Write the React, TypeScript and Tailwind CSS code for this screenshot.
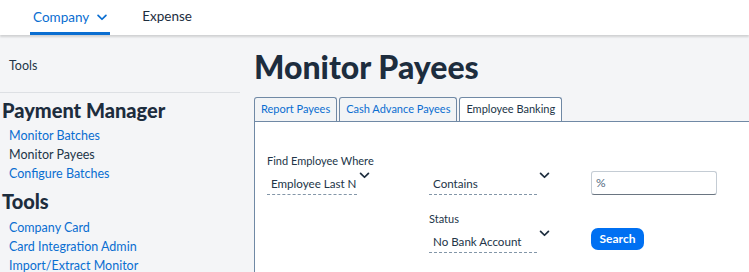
import React from 'react';

const Chevron = ({ className = '' }: { className?: string }) => (
  <svg viewBox="0 0 12 8" className={className} fill="none" stroke="currentColor" strokeWidth="2" strokeLinecap="round" strokeLinejoin="round">
    <path d="M1.5 1.5 6 6l4.5-4.5" />
  </svg>
);

const SelectBox = ({ value, width }: { value: string; width: string }) => (
  <div className="flex items-start gap-[2px]">
    <div className={`${width} border-b border-dashed border-[#8396a8] pb-[2px] pl-[4px] text-[11.6px] leading-[17px] text-[#223548] whitespace-nowrap`}>
      {value}
    </div>
    <Chevron className="mt-[-3px] h-[7px] w-[11px] text-[#1d2d3e]" />
  </div>
);

const App: React.FC = () => {
  return (
    <div className="h-[272px] w-[749px] overflow-hidden bg-[#f4f5f7] text-[#1d2d3e]" style={{ fontFamily: 'Lato, "Liberation Sans", Arial, sans-serif' }}>
      {/* Top nav */}
      <nav className="flex h-[35px] items-end bg-white pl-[30px] shadow-[0_2px_2px_rgba(0,0,0,0.15)]">
        <div className="flex h-full items-center gap-[7px] border-b-[3px] border-[#0a6ed1] pl-[3px] pr-[2px] pt-[3px] text-[13.5px] text-[#0a6ed1]">
          Company
          <Chevron className="h-[7px] w-[12px]" />
        </div>
        <div className="ml-[32px] flex h-full items-center pb-[2px] text-[13.5px] text-[#1d2d3e]">Expense</div>
      </nav>

      <div className="flex">
        {/* Sidebar */}
        <aside className="w-[240px] shrink-0">
          <div className="border-b border-[#dde0e4] pb-[16px] pl-[9px] pt-[22px] text-[12.5px] text-[#223548]">Tools</div>
          <h2 className="pl-[2px] pt-[4px] text-[20px] font-black leading-[26px] text-[#1d2d3e]">Payment Manager</h2>
          <ul className="pl-[9px] pt-[3px] text-[12.5px] leading-[19px]">
            <li className="text-[#0a6ed1]">Monitor Batches</li>
            <li className="text-[#223548]">Monitor Payees</li>
            <li className="text-[#0a6ed1]">Configure Batches</li>
          </ul>
          <h2 className="pl-[2px] pt-[5px] text-[20px] font-black leading-[26px] text-[#1d2d3e]">Tools</h2>
          <ul className="pl-[9px] pt-[4px] text-[12.5px] leading-[19px] text-[#0a6ed1]">
            <li>Company Card</li>
            <li>Card Integration Admin</li>
            <li>Import/Extract Monitor</li>
          </ul>
        </aside>

        {/* Main */}
        <main className="flex-1 pl-[14px]">
          <h1 className="pt-[12px] text-[32px] font-black leading-[40px] text-[#1d2d3e]">Monitor Payees</h1>
          <div className="mt-[10px] flex items-end gap-[2px]">
            <div className="flex h-[24px] items-center rounded-t-[3px] border border-b-0 border-[#7089a5] bg-[#f2f4f6] px-[6px] text-[11px] text-[#0a6ed1]">Report Payees</div>
            <div className="flex h-[24px] items-center rounded-t-[3px] border border-b-0 border-[#7089a5] bg-[#f2f4f6] px-[6px] text-[11px] text-[#0a6ed1]">Cash Advance Payees</div>
            <div className="flex h-[24px] items-center rounded-t-[3px] border border-b-0 border-[#7089a5] bg-white px-[6px] text-[11px] text-[#223548]">Employee Banking</div>
          </div>
          <div className="h-[200px] border-l border-t border-[#7089a5] bg-white pl-[12px] pt-[32px]">
            <div className="grid grid-cols-[162px_162px_auto] items-end">
              <div>
                <div className="mb-[7px] text-[11px] leading-[14px] text-[#223548]">Find Employee Where</div>
                <SelectBox value="Employee Last N" width="w-[90px]" />
              </div>
              <SelectBox value="Contains" width="w-[108px]" />
              <div className="flex h-[24px] w-[126px] items-center rounded-[3px] border border-[#c4ccd4] border-b-[#6a7581] px-[4px] text-[12px] text-[#556b82]">%</div>
            </div>
            <div className="mt-[17px] grid grid-cols-[162px_162px_auto] items-end">
              <div />
              <div>
                <div className="mb-[7px] text-[11px] leading-[14px] text-[#223548]">Status</div>
                <SelectBox value="No Bank Account" width="w-[108px]" />
              </div>
              <div>
                <button className="mb-[3px] h-[22px] w-[53px] rounded-[7px] bg-[#0070f2] text-[12px] font-bold text-white">Search</button>
              </div>
            </div>
          </div>
        </main>
      </div>
    </div>
  );
};

export default App;
